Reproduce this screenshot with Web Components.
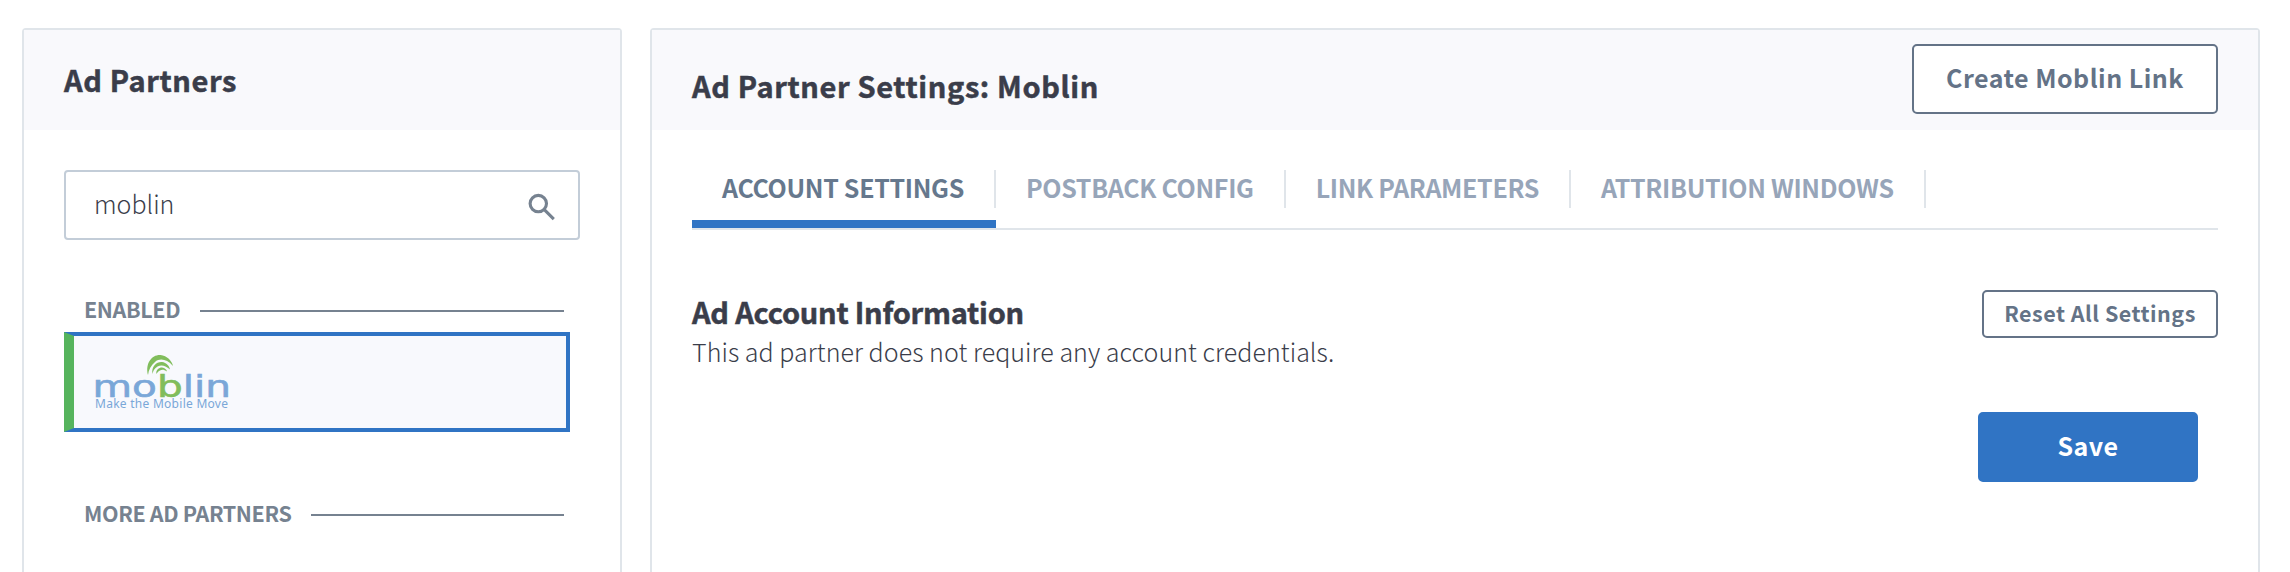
<!DOCTYPE html>
<html lang="en">
<head>
<meta charset="utf-8">
<title>Ad Partners</title>
<style>
  html, body { margin: 0; height: 100%; background: #fff; overflow: hidden; }
  body { font-family: "Noto Sans CJK SC", "Noto Sans", sans-serif; color: #3a3d4a; }
</style>
</head>
<body>
<partner-app></partner-app>

<script>
const define = (name, html) => customElements.define(name, class extends HTMLElement {
  constructor() {
    super();
    const t = document.createElement('template');
    t.innerHTML = html;
    this.attachShadow({ mode: 'open' }).append(t.content.cloneNode(true));
  }
});

define('ui-panel', `
<style>
  :host { display: block; box-sizing: border-box; border: 2px solid #e0e5ea; border-radius: 4px; background: #fff; height: 600px; }
  header { box-sizing: border-box; height: 100px; background: #f9f9fc; padding: 0 40px; display: flex; justify-content: space-between; align-items: center; }
  .title { font-size: 29px; font-weight: 700; line-height: 40px; letter-spacing: .62px; -webkit-text-stroke: .5px currentColor; margin-top: var(--title-shift, -3px); white-space: nowrap; }
  ::slotted(ui-button) { margin-top: -2px; }
  .body { padding: 40px 40px 0; }
</style>
<header><div class="title"><slot name="title"></slot></div><slot name="action"></slot></header>
<div class="body"><slot></slot></div>`);

define('ui-button', `
<style>
  :host { display: flex; box-sizing: border-box; align-items: center; justify-content: center; height: 70px; width: 306px; padding-bottom: 4px;
    border: 2px solid #647387; border-radius: 5px; background: #fff; color: #647387; font-size: 25px; font-weight: 700; letter-spacing: .48px; line-height: 1; white-space: nowrap; }
  :host([small]) { height: 48px; width: 236px; font-size: 21.5px; padding-bottom: 3px; }
  :host([primary]) { width: 220px; background: #3074c4; border-color: #3074c4; color: #fff; }
</style>
<slot></slot>`);

define('search-box', `
<style>
  :host { display: flex; box-sizing: border-box; height: 70px; border: 2px solid #c3cdd8; border-radius: 4px; padding: 0 22px 0 28px; align-items: center; justify-content: space-between; font-size: 25px; font-weight: 300; line-height: 40px; }
  span { margin-top: -4px; }
  svg { display: block; margin-top: 4px; }
</style>
<span><slot></slot></span>
<svg width="28" height="28" viewBox="0 0 28 28" fill="none" stroke="#768290" stroke-width="3.1"><circle cx="10.3" cy="10.6" r="8.2"/><path d="M16.300 16.600 25.800 26.200"/></svg>`);

define('group-label', `
<style>
  :host { display: flex; align-items: center; gap: 20px; height: 32px; padding: 0 14px 0 20px; margin-right: 2px; color: #768290; font-size: 21.5px; font-weight: 700; letter-spacing: -.37px; line-height: 32px; white-space: nowrap; }
  span { margin-top: -4px; }
  i { flex: 1; height: 2px; background: #768290; }
</style>
<span><slot></slot></span><i></i>`);

define('moblin-logo', `
<style>
  :host { display: block; width: 136px; height: 58px; }
  svg { display: block; overflow: visible; }
  text { font-family: "DejaVu Sans", sans-serif; font-size: 30px; fill: #7aa7d8; }
  .word { stroke: #7aa7d8; stroke-width: .6px; }
  .b { fill: #81bd5c; stroke: #81bd5c; }
  .tag { font-family: "Noto Sans", sans-serif; font-size: 12px; }
</style>
<svg width="136" height="58" viewBox="0 0 136 58">
  <g fill="#81bd5c">
    <path d="M53 22C50 10 57 1.500 65.500 2C72 2.500 77 8 78 13C72 6 65 5 60.500 8.500C56 12 53.500 17 53 22Z"/>
    <path d="M57.500 21C56 13 62 8.500 67 9C71.500 9.500 74.500 13 75 16.500C70 12 66 11.500 62.500 13.500C59 16 58 18 57.500 21Z"/>
    <path d="M61.500 21C60.500 17 64 14.500 67 14.500C70 15 71.500 16.500 72 18.500C69 16.500 67 16.500 65 17.500C63 18.500 62 20 61.500 21Z"/>
  </g>
  <text class="word" x="-2.500" y="43.500" textLength="138.500" lengthAdjust="spacingAndGlyphs">mo<tspan class="b">b</tspan>lin</text>
  <text class="tag" x="0" y="55.300" textLength="133" lengthAdjust="spacing">Make the Mobile Move</text>
</svg>`);

define('partner-card', `
<style>
  :host { display: flex; box-sizing: border-box; height: 100px; width: 506px; border: 4px solid #3074c4; border-left: 10px solid #56b45d; background: #f8f9fd; padding: 17px 0 0 21px; }
</style>
<slot></slot>`);

define('tab-item', `
<style>
  :host { display: block; box-sizing: border-box; height: 58px; color: #97a5b9; font-size: 25px; font-weight: 700; letter-spacing: -.335px; line-height: 34px; white-space: nowrap; }
  span { display: block; height: 38px; padding: 0 30px; border-right: 2px solid #e0e5ea; }
  :host([active]) { color: #66788d; border-bottom: 8px solid #3074c4; }
</style>
<span><slot></slot></span>`);

define('tab-bar', `
<style>:host { display: flex; border-bottom: 2px solid #e0e5ea; }</style><slot></slot>`);

define('account-section', `
<style>
  :host { display: flex; justify-content: space-between; align-items: flex-start; padding-top: 60px; height: 80px; }
  .h { font-size: 29px; font-weight: 700; line-height: 43px; letter-spacing: -.23px; -webkit-text-stroke: .5px currentColor; }
  .p { font-size: 25px; font-weight: 300; line-height: 36px; letter-spacing: .05px; }
  .t { white-space: nowrap; width: max-content; }
</style>
<div><div class="h t"><slot name="heading"></slot></div><div class="p t"><slot></slot></div></div>
<slot name="action"></slot>`);

define('partner-app', `
<style>
  :host { display: grid; grid-template-columns: 600px 1610px; gap: 28px; padding: 28px 0 0 22px; height: 544px; overflow: hidden; }
  .enabled { margin-top: 55px; margin-bottom: 5px; }
  .more { margin-top: 67px; }
  .right { --title-shift: 9px; }
  .save { display: flex; justify-content: flex-end; padding: 42px 20px 0 0; }
</style>
<ui-panel>
  <span slot="title">Ad Partners</span>
  <search-box>moblin</search-box>
  <group-label class="enabled">ENABLED</group-label>
  <partner-card><moblin-logo></moblin-logo></partner-card>
  <group-label class="more">MORE AD PARTNERS</group-label>
</ui-panel>
<ui-panel class="right">
  <span slot="title">Ad Partner Settings: Moblin</span>
  <ui-button slot="action">Create Moblin Link</ui-button>
  <tab-bar>
    <tab-item active>ACCOUNT SETTINGS</tab-item>
    <tab-item>POSTBACK CONFIG</tab-item>
    <tab-item>LINK PARAMETERS</tab-item>
    <tab-item>ATTRIBUTION WINDOWS</tab-item>
  </tab-bar>
  <account-section>
    <span slot="heading">Ad Account Information</span>
    This ad partner does not require any account credentials.
    <ui-button small slot="action">Reset All Settings</ui-button>
  </account-section>
  <div class="save"><ui-button primary>Save</ui-button></div>
</ui-panel>`);
</script>
</body>
</html>
